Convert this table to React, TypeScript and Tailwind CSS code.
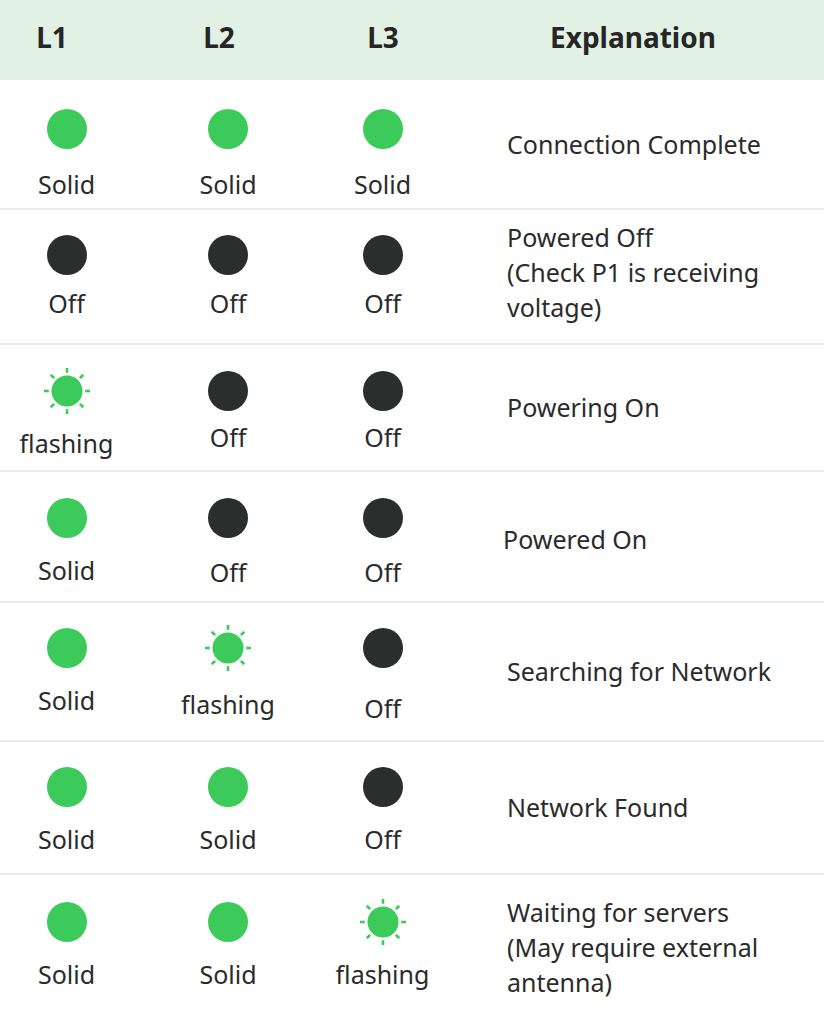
import React from "react";

type Led = { kind: "on" | "off" | "flash"; label: string; mt: number };
type Row = {
  h: number;
  top: number;
  leds: Led[];
  text: string[];
  pl: number;
  pb?: number;
  pt?: number;
};

const S = (mt: number): Led => ({ kind: "on", label: "Solid", mt });
const O = (mt: number): Led => ({ kind: "off", label: "Off", mt });
const F = (mt: number): Led => ({ kind: "flash", label: "flashing", mt });

const rows: Row[] = [
  { h: 130, top: 26, leds: [S(15), S(15), S(15)], text: ["Connection Complete"], pl: 65 },
  { h: 135, top: 22, leds: [O(8), O(8), O(8)], text: ["Powered Off", "(Check P1 is receiving", "voltage)"], pl: 65, pb: 8 },
  { h: 127, top: 23, leds: [F(12), O(6), O(6)], text: ["Powering On"], pl: 65 },
  { h: 131, top: 23, leds: [S(12), O(14), O(14)], text: ["Powered On"], pl: 61, pt: 6 },
  { h: 139, top: 22, leds: [S(12), F(16), O(20)], text: ["Searching for Network"], pl: 65 },
  { h: 133, top: 22, leds: [S(12), S(12), O(12)], text: ["Network Found"], pl: 65 },
  { h: 145, top: 24, leds: [S(12), S(12), F(12)], text: ["Waiting for servers", "(May require external", "antenna)"], pl: 65 },
];

function LedIcon({ kind }: { kind: Led["kind"] }) {
  if (kind === "flash") {
    const rays = [0, 45, 90, 135, 180, 225, 270, 315];
    return (
      <svg width="46" height="46" viewBox="0 0 46 46">
        <circle cx="23" cy="23" r="15.5" fill="#3ccb5a" />
        {rays.map((a) => {
          const r = (a * Math.PI) / 180;
          return (
            <line
              key={a}
              x1={23 + Math.cos(r) * 18.2}
              y1={23 + Math.sin(r) * 18.2}
              x2={23 + Math.cos(r) * 23}
              y2={23 + Math.sin(r) * 23}
              stroke="#3ccb5a"
              strokeWidth="2.6"
            />
          );
        })}
      </svg>
    );
  }
  return (
    <div className="flex h-[46px] w-[46px] items-center justify-center">
      <div
        className={
          kind === "on"
            ? "h-[40px] w-[40px] rounded-full bg-[#3ccb5a]"
            : "h-[40px] w-[40px] rounded-full bg-[#2c2e2d]"
        }
      />
    </div>
  );
}

export default function App() {
  return (
    <div
      className="w-[824px] bg-white text-[#2b2b2b]"
      style={{ fontFamily: '"Noto Sans", "Open Sans", sans-serif' }}
    >
      <div className="flex h-[80px] items-center bg-[#e1f2e4] pb-[6px] text-[28px] font-bold leading-none text-[#262626]">
        <div className="w-[104px] text-center">L1</div>
        <div className="w-[230px] text-center">L2</div>
        <div className="w-[98px] text-center">L3</div>
        <div className="flex-1 pl-[10px] text-center">Explanation</div>
      </div>
      {rows.map((row, i) => (
        <div
          key={i}
          className={
            i === rows.length - 1
              ? "grid grid-cols-[133px_190px_119px_1fr] text-[25px] leading-[35px]"
              : "grid grid-cols-[133px_190px_119px_1fr] border-b-2 border-[#ebebeb] text-[25px] leading-[35px]"
          }
          style={{ height: row.h }}
        >
          {row.leds.map((led, j) => (
            <div key={j} className="flex flex-col items-center" style={{ paddingTop: row.top }}>
              <LedIcon kind={led.kind} />
              <div style={{ marginTop: led.mt }}>{led.label}</div>
            </div>
          ))}
          <div
            className="flex flex-col justify-center"
            style={{ paddingLeft: row.pl, paddingBottom: row.pb ?? 0, paddingTop: row.pt ?? 0 }}
          >
            {row.text.map((t, k) => (
              <div key={k} className="whitespace-nowrap">
                {t}
              </div>
            ))}
          </div>
        </div>
      ))}
    </div>
  );
}
